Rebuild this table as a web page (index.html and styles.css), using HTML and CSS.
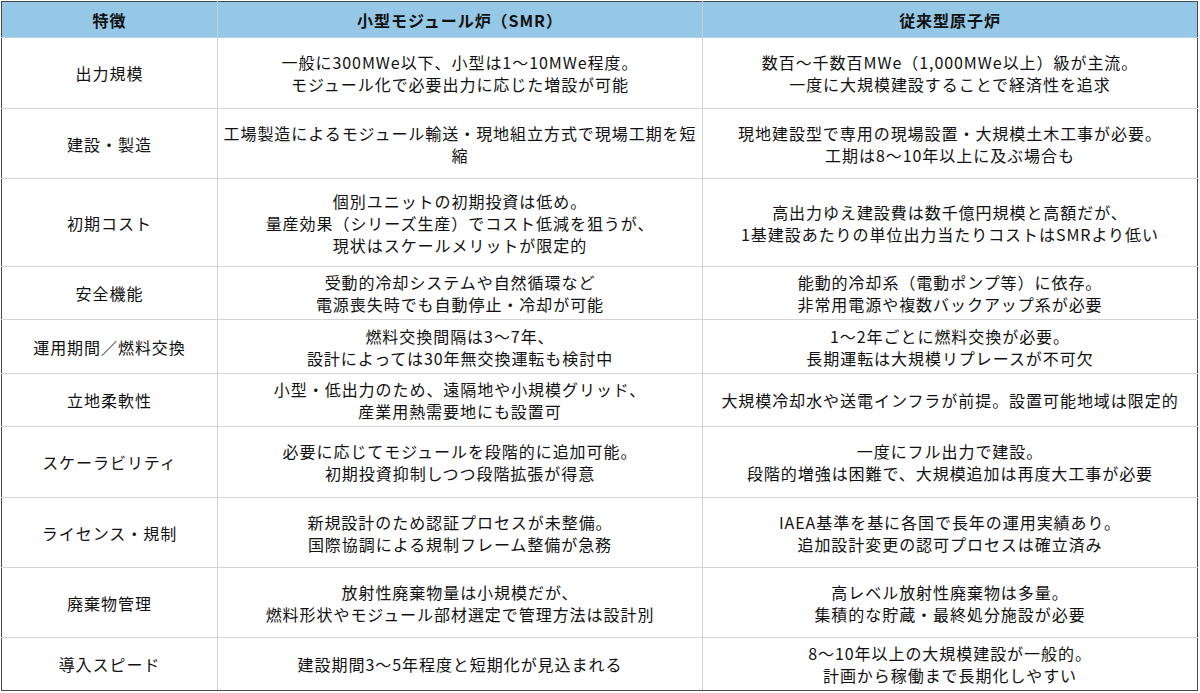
FILE: index.html
```html
<!DOCTYPE html>
<html lang="ja">
<head>
<meta charset="utf-8">
<link rel="stylesheet" href="styles.css">
</head>
<body>
<table class="cmp">
  <colgroup>
    <col class="c1"><col class="c2"><col class="c3">
  </colgroup>
  <thead>
    <tr class="h36"><th>特徴</th><th>小型モジュール炉（SMR）</th><th>従来型原子炉</th></tr>
  </thead>
  <tbody>
    <tr class="h71"><td>出力規模</td><td>一般に300MWe以下、小型は1～10MWe程度。<br>モジュール化で必要出力に応じた増設が可能</td><td>数百～千数百MWe（1,000MWe以上）級が主流。<br>一度に大規模建設することで経済性を追求</td></tr>
    <tr class="h70"><td>建設・製造</td><td>工場製造によるモジュール輸送・現地組立方式で現場工期を短<br>縮</td><td>現地建設型で専用の現場設置・大規模土木工事が必要。<br>工期は8～10年以上に及ぶ場合も</td></tr>
    <tr class="h88"><td>初期コスト</td><td>個別ユニットの初期投資は低め。<br>量産効果（シリーズ生産）でコスト低減を狙うが、<br>現状はスケールメリットが限定的</td><td>高出力ゆえ建設費は数千億円規模と高額だが、<br>1基建設あたりの単位出力当たりコストはSMRより低い</td></tr>
    <tr class="h53"><td>安全機能</td><td>受動的冷却システムや自然循環など<br>電源喪失時でも自動停止・冷却が可能</td><td>能動的冷却系（電動ポンプ等）に依存。<br>非常用電源や複数バックアップ系が必要</td></tr>
    <tr class="h54"><td>運用期間／燃料交換</td><td>燃料交換間隔は3～7年、<br>設計によっては30年無交換運転も検討中</td><td>1～2年ごとに燃料交換が必要。<br>長期運転は大規模リプレースが不可欠</td></tr>
    <tr class="h53"><td>立地柔軟性</td><td>小型・低出力のため、遠隔地や小規模グリッド、<br>産業用熱需要地にも設置可</td><td>大規模冷却水や送電インフラが前提。設置可能地域は限定的</td></tr>
    <tr class="h71"><td>スケーラビリティ</td><td>必要に応じてモジュールを段階的に追加可能。<br>初期投資抑制しつつ段階拡張が得意</td><td>一度にフル出力で建設。<br>段階的増強は困難で、大規模追加は再度大工事が必要</td></tr>
    <tr class="h70"><td>ライセンス・規制</td><td>新規設計のため認証プロセスが未整備。<br>国際協調による規制フレーム整備が急務</td><td>IAEA基準を基に各国で長年の運用実績あり。<br>追加設計変更の認可プロセスは確立済み</td></tr>
    <tr class="h70"><td>廃棄物管理</td><td>放射性廃棄物量は小規模だが、<br>燃料形状やモジュール部材選定で管理方法は設計別</td><td>高レベル放射性廃棄物は多量。<br>集積的な貯蔵・最終処分施設が必要</td></tr>
    <tr class="h53"><td>導入スピード</td><td>建設期間3～5年程度と短期化が見込まれる</td><td>8～10年以上の大規模建設が一般的。<br>計画から稼働まで長期化しやすい</td></tr>
  </tbody>
</table>
</body>
</html>
```
FILE: styles.css
```css
html, body {
  margin: 0;
  padding: 0;
  background: #ffffff;
}
body {
  padding: 1px 0 0 1px;
  font-family: "Noto Sans CJK JP", "Noto Sans", sans-serif;
  color: #111111;
}
.cmp {
  border-collapse: collapse;
  table-layout: fixed;
  width: 1196px;
  border: 1px solid #4a4a4a;
}
.c1 { width: 216px; }
.c2 { width: 485px; }
.c3 { width: 495px; }
.cmp th, .cmp td {
  border: 1px solid #d4d4d4;
  padding: 0 3px;
  text-align: center;
  vertical-align: middle;
  white-space: nowrap;
  font-size: 16px;
  letter-spacing: 0.95px;
  line-height: 22px;
  font-weight: 400;
  overflow: hidden;
}
.cmp th {
  background: #95c7e7;
  font-weight: 700;
  border-color: #b8d3e6;
  border-top-color: #4a4a4a;
}
.cmp th:first-child, .cmp td:first-child { border-left-color: #4a4a4a; }
.cmp th:last-child, .cmp td:last-child { border-right-color: #4a4a4a; }
.cmp tbody tr:last-child td { border-bottom-color: #4a4a4a; }
.h36 { height: 36px; }
.h53 { height: 53px; }
.h54 { height: 54px; }
.h70 { height: 70px; }
.h71 { height: 71px; }
.h88 { height: 88px; }
```
